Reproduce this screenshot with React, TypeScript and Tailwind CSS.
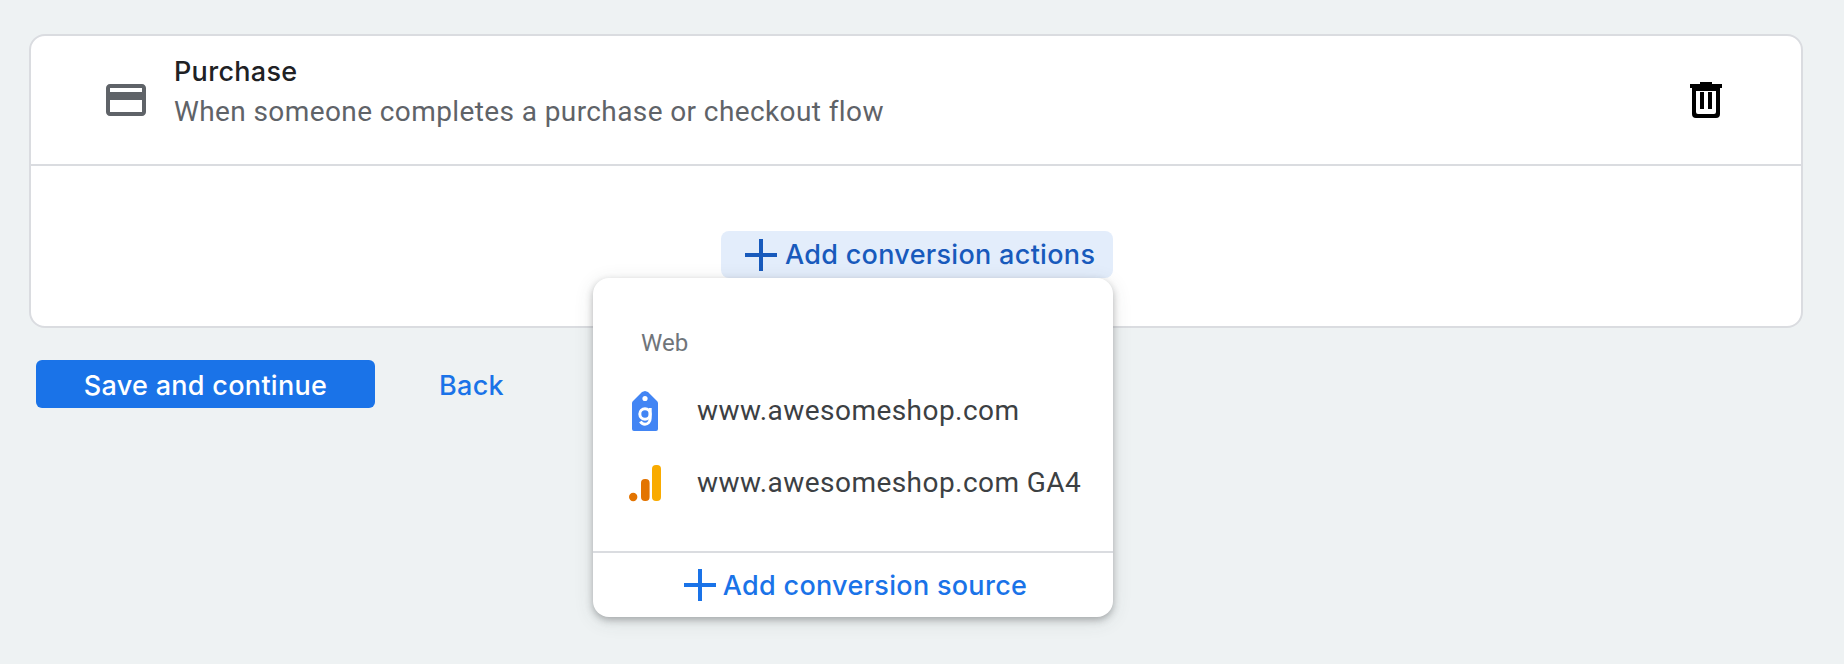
const sans = 'font-["Inter",sans-serif]';

function PlusIcon({ className }: { className: string }) {
  return (
    <svg viewBox="0 0 32 32" className={className} fill="currentColor">
      <path d="M0 14h32v4H0zM14 0h4v32h-4z" />
    </svg>
  );
}

function CardIcon() {
  return (
    <svg viewBox="0 0 24 24" className="h-12 w-12 shrink-0 text-[#5f6368]" fill="currentColor">
      <path d="M20 4H4c-1.11 0-1.99.89-1.99 2L2 18c0 1.11.89 2 2 2h16c1.11 0 2-.89 2-2V6c0-1.11-.89-2-2-2zm0 14H4v-6h16v6zm0-10H4V6h16v2z" />
    </svg>
  );
}

function TrashIcon() {
  return (
    <svg viewBox="0 0 32 36" className="h-9 w-8 text-black" fill="currentColor">
      <path d="M10 0h12v2h10v4H0V2h10z" />
      <path
        fillRule="evenodd"
        d="M2 6h28v26a4 4 0 0 1-4 4H6a4 4 0 0 1-4-4zM6 9v21a2 2 0 0 0 2 2h16a2 2 0 0 0 2-2V9z"
      />
      <path d="M10 10h4v17h-4zM18 10h4v17h-4z" />
    </svg>
  );
}

function TagIcon() {
  return (
    <svg viewBox="0 0 26 40" className="h-10 w-[26px]">
      <path
        d="M13 0l3 1 9 9c.7.7 1 1.4 1 2.4V38a2 2 0 0 1-2 2H2a2 2 0 0 1-2-2V12.4c0-1 .3-1.7 1-2.4l9-9z"
        fill="#4285f4"
      />
      <circle cx="13" cy="7.5" r="2.6" fill="#fff" />
      <g fill="none" stroke="#fff" strokeWidth="3">
        <circle cx="13" cy="23" r="5.2" />
        <path d="M18.2 17v10c0 4-2.4 6.2-5.2 6.2-2 0-3.6-.9-4.6-2.6" />
      </g>
    </svg>
  );
}

function AnalyticsIcon() {
  return (
    <svg viewBox="0 0 32 37" className="h-[37px] w-8">
      <rect x="23" y="0" width="9" height="36" rx="4" fill="#f9ab00" />
      <rect x="12" y="14" width="8.6" height="22" rx="4" fill="#e37400" />
      <circle cx="4.2" cy="32" r="4.2" fill="#e37400" />
    </svg>
  );
}

function ConversionMenu() {
  return (
    <div className="absolute right-0 top-full z-10 h-[339px] w-[520px] rounded-2xl bg-white shadow-[0_3px_7px_rgba(60,64,67,0.35),0_4px_20px_rgba(60,64,67,0.12)]">
      <div className="h-[273px] pt-[49px]">
        <div className="pl-[48px] font-['Roboto',sans-serif] text-[24px] leading-[32px] text-[#70757a]">Web</div>
        <ul className="mt-[16px] font-['Roboto',sans-serif] text-[28px] tracking-[0.45px] text-[#3c4043]">
          <li className="flex h-[72px] items-center">
            <div className="w-[104px] shrink-0 pl-[39px]">
              <TagIcon />
            </div>
            <span>www.awesomeshop.com</span>
          </li>
          <li className="flex h-[72px] items-center">
            <div className="w-[104px] shrink-0 pl-[36px]">
              <AnalyticsIcon />
            </div>
            <span>www.awesomeshop.com GA4</span>
          </li>
        </ul>
      </div>
      <div className={`flex h-[66px] items-center justify-center gap-[7px] border-t-2 border-[#dadce0] pl-[5px] text-[27px] font-medium tracking-[0.3px] text-[#1a73e8] ${sans}`}>
        <PlusIcon className="h-8 w-8" />
        <span className="pt-[2px]">Add conversion source</span>
      </div>
    </div>
  );
}

export default function App() {
  return (
    <main className="h-[664px] overflow-hidden bg-[#eef2f3] pl-[29px] pr-[41px] pt-[34px]">
      <section className="h-[294px] rounded-2xl border-2 border-[#dadce0] bg-white">
        <div className="flex h-[130px] items-center border-b-2 border-[#dadce0] pl-[71px] pr-[79px]">
          <CardIcon />
          <div className="ml-[24px] flex-1 pb-[15px]">
            <div className={`text-[27px] font-medium leading-[34px] tracking-[0.3px] text-[#202124] ${sans}`}>Purchase</div>
            <div className="mt-[5px] font-['Roboto',sans-serif] text-[28px] leading-[36px] tracking-[0.4px] text-[#5f6368]">
              When someone completes a purchase or checkout flow
            </div>
          </div>
          <TrashIcon />
        </div>
        <div className="flex justify-center pl-[2px] pt-[65px]">
          <div className="relative">
            <button className={`flex h-[47px] w-[392px] items-center gap-[8px] rounded-lg bg-[#e3edfb] pl-6 text-[27px] font-medium tracking-[0.3px] text-[#185abc] ${sans}`}>
              <PlusIcon className="h-8 w-8" />
              <span className="pt-[2px]">Add conversion actions</span>
            </button>
            <ConversionMenu />
          </div>
        </div>
      </section>

      <div className={`mt-[32px] flex items-center pl-[7px] text-[27px] font-medium tracking-[0.3px] ${sans}`}>
        <button className="h-12 w-[339px] rounded-md bg-[#1a73e8] pt-[4px] text-white">Save and continue</button>
        <button className="ml-[64px] h-12 pt-[4px] text-[#1a73e8]">Back</button>
      </div>
    </main>
  );
}
